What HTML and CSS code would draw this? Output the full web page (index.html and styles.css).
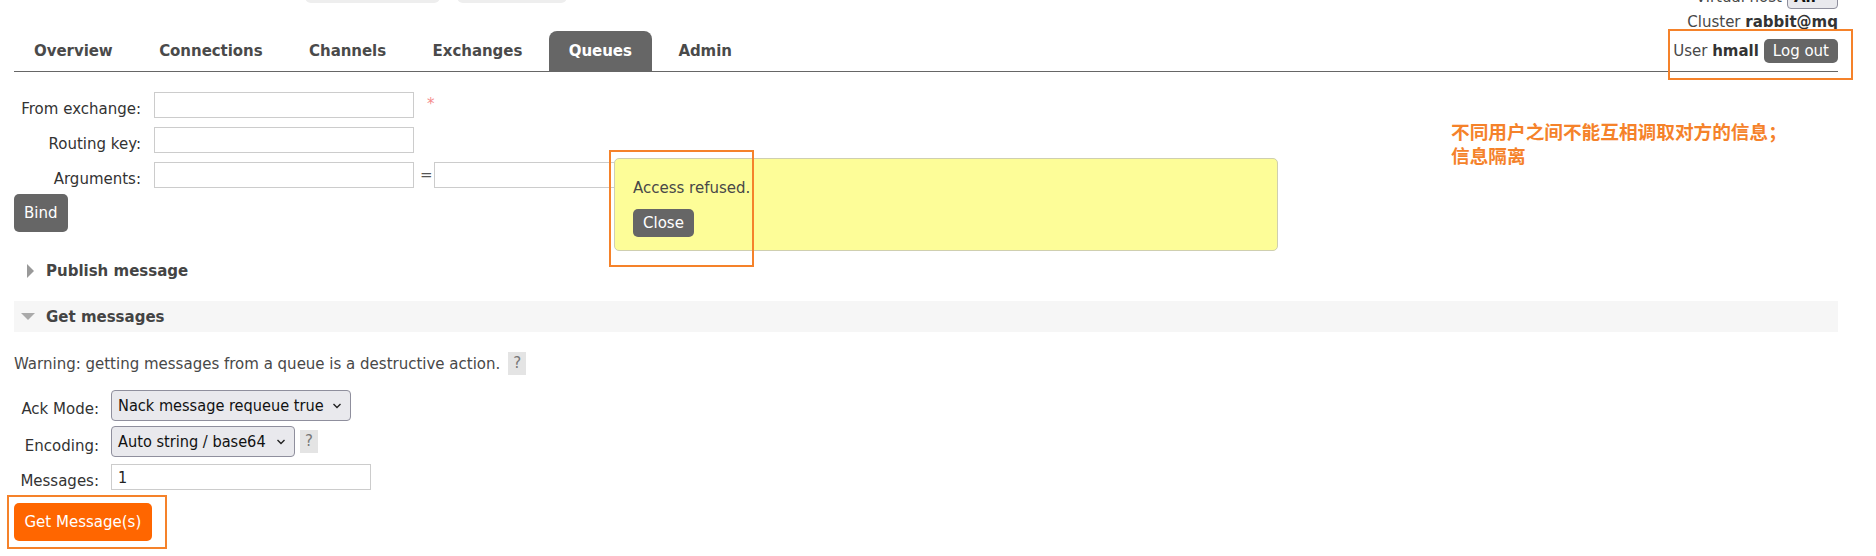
FILE: index.html
```html
<!DOCTYPE html>
<html lang="en">
<head>
<meta charset="utf-8">
<title>RabbitMQ - Queues</title>
<link rel="stylesheet" href="styles.css">
</head>
<body>
<div class="page">
  <header class="header">
    <div class="left">
      <div class="cuts"><span class="cut cut1"></span><span class="cut cut2"></span></div>
      <ul class="tabs">
        <li class="tab">Overview</li>
        <li class="tab">Connections</li>
        <li class="tab">Channels</li>
        <li class="tab">Exchanges</li>
        <li class="tab active">Queues</li>
        <li class="tab">Admin</li>
      </ul>
    </div>
    <div class="info">
      <div class="vhost"><span>Virtual host</span><span class="sel-all">All</span></div>
      <div class="cluster">Cluster <b>rabbit@mq</b></div>
      <div class="user"><span>User <b>hmall</b></span><button class="btn btn-sm">Log out</button></div>
    </div>
  </header>

  <div class="bind">
    <label class="lbl">From exchange:</label>
    <input class="inp" type="text">
    <span class="req">*</span>
    <label class="lbl">Routing key:</label>
    <input class="inp" type="text">
    <span></span>
    <label class="lbl">Arguments:</label>
    <input class="inp" type="text">
    <span class="args"><span class="eq">=</span><input class="inp" type="text"></span>
  </div>
  <button class="btn btn-lg bind-btn">Bind</button>

  <h2 class="sect-h publish"><span class="tri-r"></span>Publish message</h2>
  <h2 class="sect-h get"><span class="tri-d"></span>Get messages</h2>

  <p class="warn">Warning: getting messages from a queue is a destructive action. <span class="help">?</span></p>

  <div class="frow r1">
    <label class="lbl2 p10">Ack Mode:</label>
    <div class="sel w240"><span>Nack message requeue true</span><svg width="10" height="6" viewBox="0 0 10 6"><path d="M1.5 1l3.5 3.5L8.5 1" fill="none" stroke="#222" stroke-width="1.4"/></svg></div>
  </div>
  <div class="frow r2">
    <label class="lbl2 p11">Encoding:</label>
    <div class="ctl"><div class="sel w184"><span>Auto string / base64</span><svg width="10" height="6" viewBox="0 0 10 6"><path d="M1.5 1l3.5 3.5L8.5 1" fill="none" stroke="#222" stroke-width="1.4"/></svg></div><span class="help">?</span></div>
  </div>
  <div class="frow r3">
    <label class="lbl2 p8">Messages:</label>
    <input class="inp num" type="text" value="1">
  </div>
  <button class="btn btn-lg btn-orange">Get Message(s)</button>
</div>

<div class="popup">
  <p class="popup-msg">Access refused.</p>
  <button class="btn btn-close">Close</button>
</div>

<div class="note">不同用户之间不能互相调取对方的信息；<br>信息隔离</div>
<div class="mark mark-user"></div>
<div class="mark mark-popup"></div>
<div class="mark mark-get"></div>
</body>
</html>
```

FILE: styles.css
```css
html, body {
  margin: 0;
  padding: 0;
}
body {
  font-family: "DejaVu Sans", Verdana, sans-serif;
  font-size: 15px;
  color: #484848;
  background: #fff;
  position: relative;
  height: 556px;
  overflow: hidden;
}
.page {
  padding: 0 38px 0 14px;
}

/* header */
.header {
  display: flex;
  justify-content: space-between;
  align-items: flex-end;
  border-bottom: 1px solid #666;
  margin-top: -21px;
}
.left {
  display: flex;
  flex-direction: column;
}
.cuts {
  display: flex;
  gap: 17px;
  margin-left: 291px;
  margin-bottom: 28px;
  height: 24px;
}
.cut {
  height: 24px;
  background: #eeeeee;
  border-radius: 6px;
}
.cut1 { width: 135px; }
.cut2 { width: 110px; }
.tabs {
  display: flex;
  gap: 6.5px;
  list-style: none;
  margin: 0;
  padding: 0;
  height: 40px;
}
.tab {
  padding: 0 20px;
  line-height: 40px;
  font-weight: bold;
  letter-spacing: -0.05px;
  color: #4a4a4a;
  border-radius: 8px 8px 0 0;
}
.tab.active {
  background: #666;
  color: #fff;
}
.info {
  display: flex;
  flex-direction: column;
  align-items: flex-end;
  padding-bottom: 8px;
}
.vhost {
  display: flex;
  align-items: center;
  gap: 5px;
  height: 24px;
  line-height: 18px;
}
.sel-all {
  box-sizing: border-box;
  width: 51px;
  height: 24px;
  border: 1px solid #8f8f9d;
  border-radius: 4px;
  background: #e9e9ed;
  font-weight: bold;
  color: #111;
  padding-left: 6px;
  line-height: 22px;
}
.cluster {
  line-height: 20px;
  margin-top: 3px;
}
.cluster b, .user b {
  color: #333;
}
.user {
  display: flex;
  align-items: center;
  gap: 5px;
  margin-top: 7px;
  height: 24px;
  line-height: 18px;
}

/* buttons */
.btn {
  font-family: inherit;
  font-size: 15px;
  border: 0;
  margin: 0;
  background: #666;
  color: #fff;
  border-radius: 5px;
  display: block;
}
.btn-sm {
  padding: 3px 9px;
  line-height: 18px;
}
.btn-lg {
  padding: 10px 10px;
  line-height: 18px;
}
.btn-orange {
  background: #ff6600;
  padding: 10px 10.5px;
  margin-top: 13px;
}
.btn-close {
  padding: 5px 10px;
  line-height: 18px;
  margin-top: 12px;
}

/* bind form */
.bind {
  display: grid;
  grid-template-columns: 127px 260px auto;
  column-gap: 13px;
  row-gap: 9px;
  margin-top: 20px;
  align-items: start;
}
.lbl {
  text-align: right;
  padding-top: 8px;
  line-height: 18px;
  color: #333;
}
.inp {
  box-sizing: border-box;
  width: 260px;
  height: 26px;
  margin: 0;
  border: 1px solid #ccc;
  padding: 0 6px;
  background: #fff;
  font-family: "DejaVu Sans Condensed", "Noto Sans", sans-serif;
  font-size: 16px;
  color: #222;
}
.req {
  color: #f58c8c;
  padding-top: 3px;
  line-height: 18px;
}
.args {
  display: flex;
  align-items: center;
  margin-left: -13px;
  height: 26px;
}
.eq {
  margin-left: 6px;
  margin-right: 1px;
  color: #555;
}
.bind-btn {
  margin-top: 6px;
}

/* sections */
.sect-h {
  display: flex;
  align-items: center;
  height: 31px;
  margin: 0;
  padding-left: 7px;
  font-size: 15px;
  font-weight: bold;
  color: #444;
}
.publish {
  margin-top: 23px;
}
.get {
  margin-top: 15px;
  background: #f6f6f6;
}
.tri-r {
  width: 0;
  height: 0;
  border-left: 7px solid #999;
  border-top: 7px solid transparent;
  border-bottom: 7px solid transparent;
  margin-left: 6px;
  margin-right: 12px;
}
.tri-d {
  width: 0;
  height: 0;
  border-top: 7px solid #aaa;
  border-left: 7px solid transparent;
  border-right: 7px solid transparent;
  margin-right: 11px;
}
.warn {
  display: flex;
  align-items: center;
  gap: 8px;
  height: 23px;
  margin: 20px 0 0;
}
.help {
  display: inline-block;
  width: 18px;
  height: 23px;
  background: #e4e4e4;
  color: #777;
  text-align: center;
  line-height: 23px;
}

/* get form */
.frow {
  display: grid;
  grid-template-columns: 85px auto;
  column-gap: 12px;
  align-items: start;
  justify-items: start;
}
.r1 { margin-top: 15px; }
.r2 { margin-top: 5px; }
.r3 { margin-top: 7px; }
.lbl2 {
  justify-self: end;
  line-height: 18px;
  color: #333;
}
.p10 { padding-top: 10px; }
.p11 { padding-top: 11px; }
.p8 { padding-top: 8px; }
.ctl {
  display: flex;
  align-items: center;
  gap: 5px;
}
.sel {
  display: flex;
  align-items: center;
  justify-content: space-between;
  box-sizing: border-box;
  height: 31px;
  border: 1px solid #8f8f9d;
  border-radius: 4px;
  background: #e9e9ed;
  padding: 0 8px 0 6px;
  font-family: "DejaVu Sans Condensed", "Noto Sans", sans-serif;
  font-size: 16.2px;
  color: #111;
}
.w240 { width: 240px; }
.w184 { width: 184px; }

/* overlays */
.popup {
  position: absolute;
  left: 614px;
  top: 158px;
  box-sizing: border-box;
  width: 664px;
  height: 93px;
  background: #fdfd98;
  border: 1px solid #cfcfb0;
  border-radius: 5px;
  padding: 20px 18px 13px;
}
.popup-msg {
  margin: 0;
  line-height: 18px;
}
.note {
  position: absolute;
  left: 1451px;
  top: 119px;
  font-family: "Noto Sans CJK SC", sans-serif;
  font-size: 18.67px;
  font-weight: bold;
  line-height: 24px;
  color: #f5822a;
}
.mark {
  position: absolute;
  box-sizing: border-box;
  border: 2px solid #f5822a;
}
.mark-user { left: 1668px; top: 29px; width: 185px; height: 51px; }
.mark-popup { left: 609px; top: 150px; width: 145px; height: 117px; }
.mark-get { left: 7px; top: 495px; width: 160px; height: 54px; }
```
